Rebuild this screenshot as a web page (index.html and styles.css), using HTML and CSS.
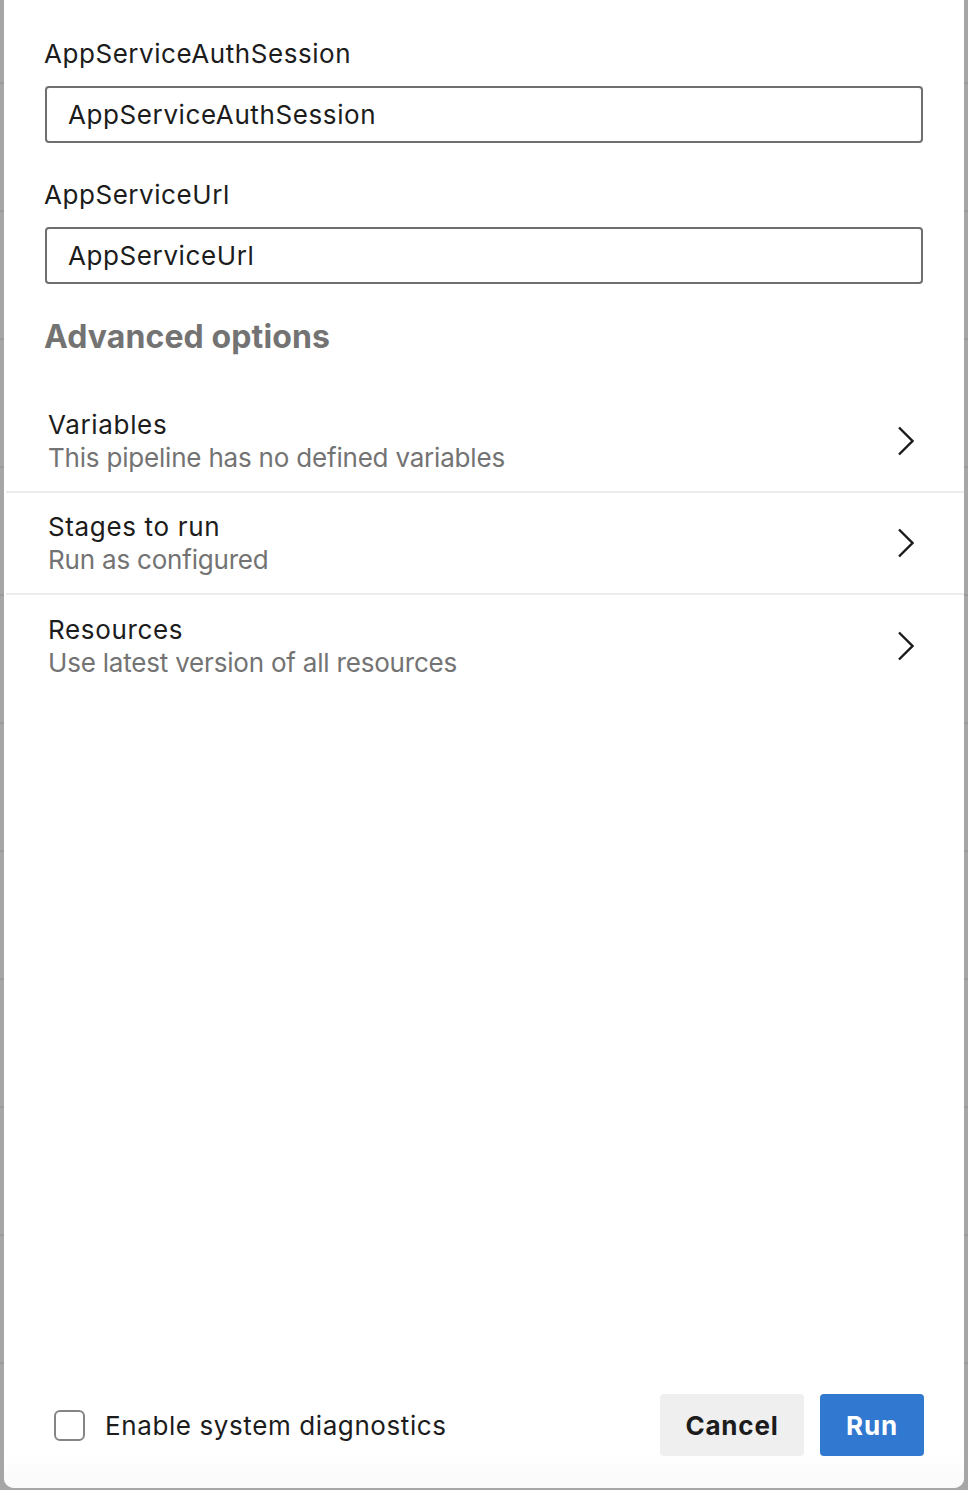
FILE: index.html
```html
<!DOCTYPE html>
<html lang="en">
<head>
<meta charset="utf-8">
<title>Run pipeline</title>
<link rel="stylesheet" href="styles.css">
</head>
<body>
<div class="backdrop">
  <div class="panel">
    <div class="content">
      <div class="field">
        <label class="field-label" for="f1">AppServiceAuthSession</label>
        <input class="field-input" id="f1" type="text" value="AppServiceAuthSession">
      </div>
      <div class="field">
        <label class="field-label" for="f2">AppServiceUrl</label>
        <input class="field-input" id="f2" type="text" value="AppServiceUrl">
      </div>
      <h2 class="section-title">Advanced options</h2>
    </div>
    <div class="options">
      <div class="option-row">
        <div class="option-text">
          <div class="option-title">Variables</div>
          <div class="option-sub">This pipeline has no defined variables</div>
        </div>
        <svg class="chevron" width="17" height="30" viewBox="0 0 17 30"><path d="M2 1.5 L15.5 15 L2 28.5" fill="none" stroke="#1a1a1a" stroke-width="2.4"/></svg>
      </div>
      <div class="option-row">
        <div class="option-text">
          <div class="option-title">Stages to run</div>
          <div class="option-sub">Run as configured</div>
        </div>
        <svg class="chevron" width="17" height="30" viewBox="0 0 17 30"><path d="M2 1.5 L15.5 15 L2 28.5" fill="none" stroke="#1a1a1a" stroke-width="2.4"/></svg>
      </div>
      <div class="option-row last">
        <div class="option-text">
          <div class="option-title">Resources</div>
          <div class="option-sub">Use latest version of all resources</div>
        </div>
        <svg class="chevron" width="17" height="30" viewBox="0 0 17 30"><path d="M2 1.5 L15.5 15 L2 28.5" fill="none" stroke="#1a1a1a" stroke-width="2.4"/></svg>
      </div>
    </div>
    <div class="spacer"></div>
    <div class="footer">
      <label class="check">
        <span class="check-box"></span>
        <span class="check-label">Enable system diagnostics</span>
      </label>
      <div class="buttons">
        <button class="btn btn-secondary" type="button">Cancel</button>
        <button class="btn btn-primary" type="button">Run</button>
      </div>
    </div>
  </div>
</div>
</body>
</html>
```

FILE: styles.css
```css
html, body {
  margin: 0;
  padding: 0;
}
body {
  width: 968px;
  height: 1490px;
  overflow: hidden;
  background-color: #a6a6a6;
  background-image: repeating-linear-gradient(to bottom,
    transparent 0px, transparent 82px,
    #9a9a9a 82px, #9a9a9a 84px,
    transparent 84px, transparent 128px);
  background-position: 0 0;
  font-family: Inter, "Noto Sans", "Liberation Sans", sans-serif;
  color: #1c1c1c;
}
.backdrop {
  padding-left: 4px;
  height: 1490px;
  box-sizing: border-box;
}
.panel {
  width: 960px;
  height: 1488px;
  background: #ffffff;
  border-radius: 0 0 10px 10px;
  display: flex;
  flex-direction: column;
  overflow: hidden;
}
.content {
  padding: 37px 41px 0 40px;
}
.field {
  display: flex;
  flex-direction: column;
  margin-bottom: 35px;
}
.field-label {
  font-size: 26px;
  line-height: 33px;
  color: #1c1c1c;
  letter-spacing: 0.55px;
  margin-bottom: 16px;
}
.field-input {
  box-sizing: border-box;
  height: 57px;
  width: 100%;
  margin-left: 1px;
  width: calc(100% - 1px);
  border: 2px solid #6f6f6f;
  border-radius: 4px;
  padding: 0 21px;
  font-family: inherit;
  font-size: 26px;
  letter-spacing: 0.6px;
  color: #1c1c1c;
  background: #fff;
  outline: none;
}
.section-title {
  margin: -2px 0 0 0;
  font-size: 32px;
  line-height: 40px;
  font-weight: 700;
  color: #737373;
  letter-spacing: 0.1px;
}
.options {
  margin-top: 34px;
  padding-left: 2px;
}
.option-row {
  display: flex;
  align-items: center;
  height: 102px;
  box-sizing: border-box;
  border-bottom: 2px solid #ececec;
  padding: 0 50px 0 42px;
}
.option-row.last {
  border-bottom: none;
}
.option-text {
  flex: 1;
  display: flex;
  flex-direction: column;
  padding-bottom: 1px;
}
.option-title {
  font-size: 26px;
  line-height: 33px;
  letter-spacing: 0.65px;
  color: #1c1c1c;
}
.option-sub {
  font-size: 26px;
  line-height: 33px;
  letter-spacing: -0.2px;
  color: #737373;
}
.chevron {
  display: block;
  flex: none;
}
.spacer {
  flex: 1;
}
.footer {
  display: flex;
  align-items: center;
  justify-content: space-between;
  padding: 0 40px 32px 50px;
  background: linear-gradient(to bottom, #ffffff 60%, #fafafa 100%);
}
.check {
  display: flex;
  align-items: center;
  gap: 20px;
}
.check-box {
  width: 31px;
  height: 31px;
  box-sizing: border-box;
  border: 2px solid #858585;
  border-radius: 6px;
  background: #fff;
}
.check-label {
  font-size: 26px;
  line-height: 33px;
  letter-spacing: 0.6px;
  color: #1c1c1c;
}
.buttons {
  display: flex;
  gap: 16px;
}
.btn {
  height: 62px;
  border: none;
  border-radius: 4px;
  font-family: inherit;
  font-size: 26px;
  font-weight: 700;
  letter-spacing: 0.8px;
  padding: 0;
  margin: 0;
}
.btn-secondary {
  width: 144px;
  background: #efefef;
  color: #1c1c1c;
}
.btn-primary {
  width: 104px;
  background: #3078d0;
  color: #ffffff;
}
```
